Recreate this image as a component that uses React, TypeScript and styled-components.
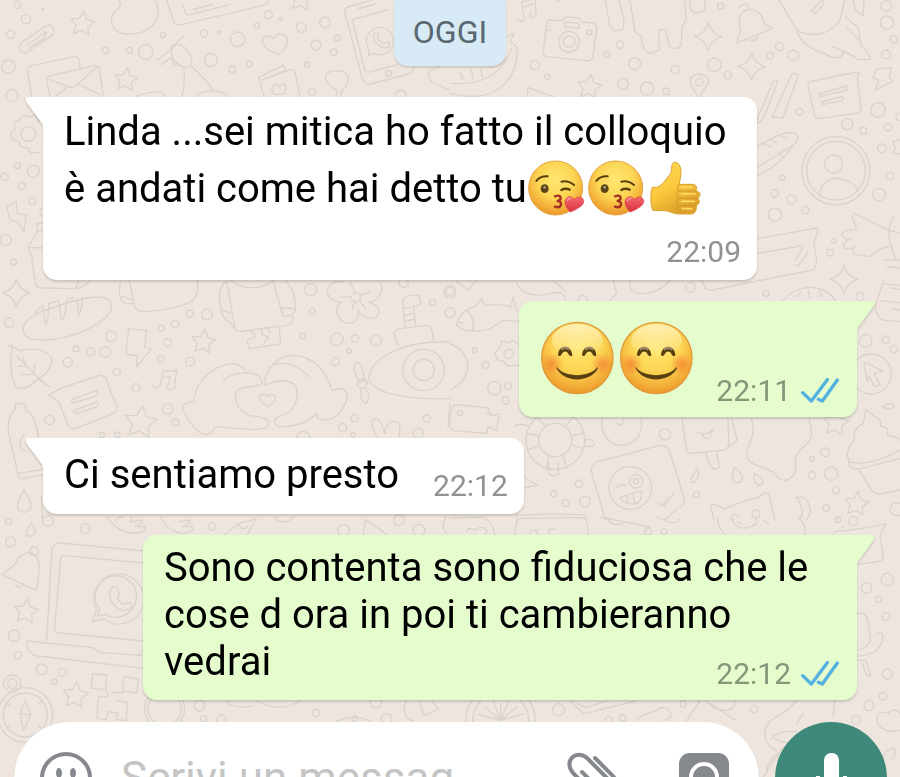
import React, { useId } from "react";
import styled, { createGlobalStyle, css } from "styled-components";

const GlobalStyle = createGlobalStyle`
  *, *::before, *::after { box-sizing: border-box; }
  html, body { margin: 0; height: 100%; overflow: hidden; }
  body { font-family: Roboto, "Liberation Sans", sans-serif; background: #eee6de; }
`;

/* ---------- layout ---------- */

const Screen = styled.main`
  position: relative;
  isolation: isolate;
  display: flex;
  flex-direction: column;
  height: 100vh;
  overflow: hidden;
  background: #eee6de;
`;

const WallpaperSvg = styled.svg`
  position: absolute;
  inset: 0;
  z-index: -1;
  width: 100%;
  height: 100%;
`;

const DayChip = styled.h2`
  align-self: center;
  flex: none;
  margin: 0;
  padding: 11px 19px 13px;
  border-radius: 0 0 14px 14px;
  background: #d8eaf5;
  box-shadow: 0 2px 2px rgba(0, 0, 0, 0.12);
  color: #596870;
  font-size: 32px;
  font-weight: 400;
  line-height: 42px;
`;

const Thread = styled.ol`
  display: flex;
  flex-direction: column;
  flex: none;
  gap: 21px;
  margin: 0;
  padding: 31px 43px 22px;
  list-style: none;
`;

type Side = "in" | "out";
type Flow = "stack" | "row" | "overlay";

const Bubble = styled.li<{ $side: Side; $flow: Flow }>`
  position: relative;
  max-width: calc(100% - 100px);
  filter: drop-shadow(0 2px 1px rgba(60, 50, 40, 0.2));
  ${({ $side }) =>
    $side === "in"
      ? css`
          align-self: flex-start;
          padding: 9px 16px 11px 21px;
          background: #ffffff;
          border-radius: 0 14px 14px 14px;
          color: #8f9194;
        `
      : css`
          align-self: flex-end;
          padding: 9px 18px 9px 21px;
          background: #e5fdcd;
          border-radius: 14px 0 14px 14px;
          color: #83977a;
        `}
  ${({ $flow }) =>
    $flow === "stack"
      ? css`
          display: flex;
          flex-direction: column;
          gap: 18px;
        `
      : $flow === "row"
        ? css`
            display: flex;
            align-items: flex-end;
            gap: 34px;
          `
        : css`
            display: grid;
            & > * {
              grid-area: 1 / 1;
            }
          `}

  &::before {
    content: "";
    position: absolute;
    top: 0;
    width: 19px;
    height: 30px;
    background: inherit;
    ${({ $side }) =>
      $side === "in"
        ? css`
            left: -18px;
            clip-path: path("M3 0H19V30H18Q18 27 16 25L2 6Q-1 0 3 0Z");
          `
        : css`
            right: -18px;
            clip-path: path("M16 0H0V30H1Q1 27 3 25L17 6Q20 0 16 0Z");
          `}
  }
`;

const textSpacing = {
  stack: css`
    margin: -3px 0 0;
    line-height: 57px;
  `,
  row: css`
    margin: 4px 0 5px;
    line-height: 47px;
  `,
  overlay: css`
    margin: 0 0 6px;
    line-height: 47px;
  `,
};

const MessageText = styled.p<{ $flow: Flow }>`
  color: #000;
  font-size: 40px;
  ${({ $flow }) => textSpacing[$flow]}
`;

const EmojiRow = styled.div`
  display: flex;
  margin: 10px -14px 12px -2px;
`;

const Meta = styled.div`
  display: flex;
  align-items: center;
  align-self: flex-end;
  justify-self: end;
  margin-left: auto;
  gap: 10px;
  font-size: 30px;
  line-height: 34px;
`;

const TickSvg = styled.svg`
  width: 38px;
  height: 26px;
  color: #53b1e1;
`;

const InlineEmoji = styled.svg`
  width: 60px;
  height: 60px;
  margin: -6px 0;
  vertical-align: -10px;
`;

const BigEmoji = styled.svg`
  width: 79px;
  height: 76px;
`;

const Composer = styled.form`
  display: flex;
  flex: none;
  gap: 16px;
  padding: 0 13px 8px 14px;
`;

const Field = styled.div`
  display: flex;
  flex: 1;
  align-items: center;
  min-width: 0;
  height: 112px;
  padding: 0 30px 0 25px;
  border-radius: 56px;
  background: #fff;
  box-shadow: 0 1px 2px rgba(0, 0, 0, 0.12);
`;

const TextInput = styled.input`
  flex: 1;
  min-width: 0;
  height: 60px;
  margin-left: 28px;
  padding: 0;
  border: 0;
  outline: 0;
  background: transparent;
  color: #000;
  font: 400 44px/60px Roboto, "Liberation Sans", sans-serif;
  &::placeholder {
    color: #c4c4c4;
    opacity: 1;
  }
`;

const IconButton = styled.button`
  display: grid;
  flex: none;
  place-items: center;
  padding: 0;
  border: 0;
  background: none;
  color: #85888d;
  cursor: pointer;
  & + & {
    margin-left: 60px;
  }
`;

const MicButton = styled.button`
  display: grid;
  flex: none;
  place-items: center;
  width: 112px;
  height: 112px;
  padding: 0;
  border: 0;
  border-radius: 50%;
  background: #3f897b;
  color: #fff;
  cursor: pointer;
`;

/* ---------- emoji ---------- */

function FaceGradient({ id, cx, cy, r }: { id: string; cx: number; cy: number; r: number }) {
  return (
    <radialGradient id={id} gradientUnits="userSpaceOnUse" cx={cx} cy={cy - r * 0.3} r={r * 1.35}>
      <stop offset="0" stopColor="#ffe873" />
      <stop offset="0.5" stopColor="#fcd553" />
      <stop offset="0.82" stopColor="#f2ab35" />
      <stop offset="1" stopColor="#e8912c" />
    </radialGradient>
  );
}

function Kiss() {
  const id = useId();
  return (
    <InlineEmoji viewBox="0 0 180 180" role="img" aria-label="faccina che manda un bacio">
      <defs>
        <FaceGradient id={id + "f"} cx={86} cy={90} r={81} />
        <linearGradient id={id + "h"} x1="0" y1="0" x2="0" y2="1">
          <stop offset="0" stopColor="#f4696f" />
          <stop offset="1" stopColor="#d8303f" />
        </linearGradient>
      </defs>
      <circle cx="86" cy="90" r="81" fill={`url(#${id}f)`} stroke="#e3a341" strokeWidth="3" />
      <g fill="none" stroke="#5a3f0e" strokeWidth="6" strokeLinecap="round">
        <path d="M28 69Q39 54 62 55" />
        <path d="M103 71Q124 67 141 81" />
        <path d="M103 96Q115 89 128 95" strokeWidth="7" />
      </g>
      <ellipse cx="53" cy="92" rx="12" ry="13" fill="#5b4418" />
      <circle cx="53" cy="88" r="4" fill="#a99a78" />
      <path
        d="M84 115Q98 110 101 118Q102 127 92 129Q104 131 102 141Q98 151 84 146"
        fill="none"
        stroke="#a33123"
        strokeWidth="7"
        strokeLinecap="round"
        strokeLinejoin="round"
      />
      <path
        d="M130 162C119 151 110 137 116 124C122 113 137 114 142 126C149 113 167 115 170 127C173 142 150 154 130 162Z"
        fill={`url(#${id}h)`}
        stroke="#d73c48"
        strokeWidth="2"
      />
      <path d="M121 128Q125 120 132 121" fill="none" stroke="#fca0a0" strokeWidth="4" strokeLinecap="round" />
    </InlineEmoji>
  );
}

function ThumbsUp() {
  const id = useId();
  return (
    <InlineEmoji viewBox="0 0 180 180" role="img" aria-label="pollice in su">
      <defs>
        <linearGradient id={id} x1="0" y1="0" x2="0.5" y2="1">
          <stop offset="0" stopColor="#fbd75a" />
          <stop offset="0.55" stopColor="#fcc93c" />
          <stop offset="1" stopColor="#dda02a" />
        </linearGradient>
      </defs>
      <path
        d="M16 88C36 90 44 80 54 68C69 50 74 44 74 30C74 18 78 12 86 13C98 15 102 30 102 43C102 58 97 70 97 79L137 79C150 79 152 94 145 99C162 99 163 116 151 121C160 124 158 140 147 143C151 151 145 168 132 168L103 168C75 169 65 156 44 158L17 157C10 138 10 104 16 88Z"
        fill={`url(#${id})`}
        stroke="#d9a02e"
        strokeWidth="3"
        strokeLinejoin="round"
      />
      <path d="M97 79Q88 84 94 98Q84 106 94 119Q84 130 94 142Q88 155 100 166" fill="none" stroke="#d29a2b" strokeWidth="3" />
      <path d="M95 99H145M94 121H151M95 143H146" fill="none" stroke="#cf9629" strokeWidth="3" strokeLinecap="round" />
      <path d="M104 87H136M104 108H144M104 130H142M106 152H134" fill="none" stroke="#ffdc68" strokeWidth="5" strokeLinecap="round" />
    </InlineEmoji>
  );
}

function Smile() {
  const id = useId();
  return (
    <BigEmoji viewBox="0 0 237 228" role="img" aria-label="faccina sorridente">
      <defs>
        <FaceGradient id={id + "f"} cx={118} cy={114} r={109} />
        <radialGradient id={id + "c"}>
          <stop offset="0" stopColor="#f27a2e" stopOpacity="0.7" />
          <stop offset="1" stopColor="#f27a2e" stopOpacity="0" />
        </radialGradient>
        <linearGradient id={id + "s"} x1="0" y1="0" x2="0" y2="1">
          <stop offset="0" stopColor="#fff6c9" stopOpacity="0.8" />
          <stop offset="1" stopColor="#fff6c9" stopOpacity="0" />
        </linearGradient>
      </defs>
      <circle cx="118" cy="114" r="107" fill={`url(#${id}f)`} stroke="#e09a3a" strokeWidth="4" />
      <ellipse cx="118" cy="62" rx="76" ry="50" fill={`url(#${id}s)`} />
      <circle cx="42" cy="133" r="34" fill={`url(#${id}c)`} />
      <circle cx="194" cy="133" r="34" fill={`url(#${id}c)`} />
      <g fill="#57400f">
        <path d="M60 105C62 72 100 72 103 106C99 111 94 108 91 101C86 92 77 92 72 101C68 109 62 110 60 105Z" />
        <path d="M132 105C135 72 173 72 175 106C171 111 166 108 163 101C158 92 149 92 144 101C140 109 134 110 132 105Z" />
        <path d="M57 141C76 173 157 174 178 141C181 142 180 146 177 150C152 188 82 187 59 150C56 146 55 143 57 141Z" />
      </g>
      <path d="M72 87Q81 80 92 87M144 87Q153 80 164 87" fill="none" stroke="#a08a68" strokeWidth="7" strokeLinecap="round" />
    </BigEmoji>
  );
}

function Ticks() {
  return (
    <TickSvg viewBox="0 0 114 78" role="img" aria-label="letto">
      <path
        d="M5 44L31 69L79 5M52 64L64 69L109 6"
        fill="none"
        stroke="currentColor"
        strokeWidth="10"
        strokeLinecap="round"
        strokeLinejoin="round"
      />
    </TickSvg>
  );
}

/* ---------- wallpaper ---------- */

type Dot = [number, number, number];

interface Patch {
  x: number;
  y: number;
  dots: Dot[];
  stars: Dot[];
  sparks?: Dot[];
  lines: string[];
}

function star(cx: number, cy: number, r: number) {
  const pts: string[] = [];
  for (let i = 0; i < 10; i++) {
    const a = (Math.PI / 5) * i - Math.PI / 2 + 0.12;
    const k = i % 2 ? r * 0.5 : r;
    pts.push(`${(cx + Math.cos(a) * k).toFixed(0)} ${(cy + Math.sin(a) * k).toFixed(0)}`);
  }
  return `M${pts.join("L")}Z`;
}

function spark(cx: number, cy: number, r: number) {
  const k = r * 0.2;
  return `M${cx} ${cy - r}Q${cx + k} ${cy - k} ${cx + r} ${cy}Q${cx + k} ${cy + k} ${cx} ${cy + r}Q${cx - k} ${cy + k} ${cx - r} ${cy}Q${cx - k} ${cy - k} ${cx} ${cy - r}Z`;
}

const patches: Patch[] = [
  {
    x: 0,
    y: 0,
    dots: [
      [52, 15, 11], [78, 58, 14], [32, 103, 12], [25, 200, 20], [36, 287, 18], [489, 105, 8], [612, 100, 11],
      [657, 97, 4], [713, 118, 22], [805, 45, 12], [842, 57, 4], [770, 78, 8], [904, 82, 15], [975, 67, 16],
      [1011, 114, 9], [948, 135, 15], [1001, 157, 10], [437, 156, 22], [316, 151, 10], [388, 151, 9],
      [633, 180, 19], [697, 208, 10], [748, 192, 9], [921, 194, 8], [936, 276, 10], [1203, 285, 15], [128, 28, 3],
      [52, 497, 9], [14, 530, 11], [65, 558, 11], [100, 514, 18], [97, 604, 10], [17, 720, 17], [1166, 220, 9],
      [85, 402, 22],
    ],
    stars: [[247, 72, 38], [378, 240, 36], [903, -2, 38]],
    lines: [
      "M64 128L140 77C160 70 170 95 155 107L82 156C62 168 50 142 64 128ZM80 135L138 96M86 146L130 116Q146 100 132 94",
      "M358 0C365 12 360 22 350 30C325 52 328 96 376 102C430 106 476 80 474 30Q472 10 464 0",
      "M500 0L520 62Q526 78 545 74L800 14L805 0M548 12L556 38Q560 46 570 44L690 14M580 28L640 12",
      "M788 126C788 105 812 104 820 116C828 96 860 98 862 120C864 142 850 154 838 163C816 158 794 148 788 126Z",
      "M95 290L83 215Q83 200 96 197L220 170Q236 168 238 182L240 202M150 290L140 240Q142 230 155 227L280 197Q294 196 298 208L310 290M145 238L213 262Q222 264 228 256L292 200M166 290L205 258M234 252L300 284",
      "M472 180L512 150Q512 134 524 134L552 108M484 194L514 172Q516 192 530 198M524 136C550 126 574 160 576 186C572 210 540 204 522 180C510 160 514 146 524 136ZM552 205Q556 250 546 290M574 198Q612 230 640 272Q670 275 684 290M590 290Q600 274 640 272M410 290Q440 274 486 276L494 290",
      "M792 290L776 232L850 196L858 210L786 240M786 240L870 210Q884 208 886 220L900 290M815 266Q826 238 836 262Q854 240 858 264Q858 286 838 282Q818 290 815 266",
      "M1012 272C990 262 972 240 978 226C990 206 1036 208 1044 230C1050 254 1030 268 1024 276L1022 288M1012 272L1008 288",
      "M1118 0L1046 20Q1030 26 1036 44L1086 232Q1092 256 1112 252L1225 222Q1246 214 1242 200M1072 56L1166 28M1058 62L1094 210Q1098 218 1108 216L1192 194M1058 62Q1060 56 1072 54M1076 26L1126 12",
      "M1108 155L1106 166L1122 160A41 41 0 1 0 1100 132ZM1122 102Q1128 92 1136 106L1132 114Q1142 130 1154 130L1164 124Q1174 134 1166 140C1148 152 1112 124 1122 102Z",
      "M1350 270L1296 246Q1276 224 1294 210L1320 196",
      "M120 456L92 460L84 444L62 440L58 424L38 420L32 398L46 388L42 368L58 360L70 346L90 352L104 344L118 366",
      "M20 620L48 604L52 640L78 646L72 694L54 666L30 660Z",
      "M130 620Q110 640 128 650M130 668L112 672L112 694L84 744L100 780M112 694L130 690M86 742L130 744",
    ],
  },
  {
    x: 450,
    y: 0,
    dots: [
      [357, 125, 31], [357, 125, 17], [418, 97, 8], [510, 134, 11], [470, 163, 9], [554, 191, 18], [255, 195, 14],
      [292, 231, 8], [675, 209, 12], [519, 252, 16], [591, 266, 20], [648, 274, 10], [793, 194, 20], [833, 225, 11],
      [812, 18, 9], [961, 167, 10], [989, 140, 12], [1030, 166, 16], [1309, 18, 16], [1311, 68, 20], [1331, 118, 11],
      [1308, 163, 13], [1284, 330, 22], [1049, 335, 10], [1192, 373, 17], [1240, 392, 10], [1314, 382, 11],
      [1296, 445, 13], [1320, 528, 11], [997, 533, 8], [974, 580, 11], [1025, 598, 14], [975, 644, 20],
      [1066, 631, 11], [1287, 584, 19], [1158, 512, 102], [1158, 512, 88], [1151, 492, 27], [1152, 722, 7],
      [1141, 758, 10], [748, 247, 11], [324, 0, 5], [1350, 350, 12],
    ],
    stars: [[418, 262, 38]],
    sparks: [[775, 110, 42], [905, 200, 42]],
    lines: [
      "M202 58A10 8 0 1 0 222 54L214 6L256 -4L258 42A10 8 0 1 1 244 38M216 22L250 12",
      "M296 60L335 62L350 50L388 54L396 66L430 70Q442 74 440 88L428 172Q424 184 410 182L290 170Q278 168 280 152L290 70ZM344 66L386 70L388 84L344 80ZM290 88Q296 98 302 88",
      "M466 0L480 80Q494 102 520 86L522 60L508 0M540 0L556 98L574 106Q576 160 604 160L628 150L626 92Q636 86 648 92L658 142Q690 152 694 130L696 80L708 62L704 0M720 0L722 30Q734 46 766 32L764 0",
      "M862 130Q860 112 872 96Q858 44 888 30C916 22 936 40 944 72L968 84L864 128M870 22Q876 8 892 14L896 26M900 120Q924 124 924 104",
      "M986 0C1006 20 1024 80 1050 96C1090 110 1140 106 1170 60L1184 0M1084 34L1112 4Q1124 0 1120 14L1096 40ZM1040 92C1050 120 1080 150 1122 160C1150 176 1170 180 1180 160Q1170 144 1146 140M1170 150Q1200 160 1222 178L1262 178Q1252 150 1232 138L1226 84L1186 50M1210 0L1216 30L1240 48L1242 0M1190 80L1226 120",
      "M746 292C734 270 718 256 720 240C728 216 768 218 776 240C778 258 752 272 750 292",
      "M924 370Q920 350 934 330L972 240Q984 238 982 248L940 356ZM966 352L1026 222Q1040 216 1044 230L998 354L970 350Z",
      "M1074 256Q1074 246 1084 244L1190 222L1228 216L1222 240L1234 326Q1232 338 1220 340L1106 356Q1096 356 1094 346ZM1106 282L1188 258Q1196 260 1192 270L1110 290ZM1114 306L1176 290Q1184 294 1178 302L1118 314Z",
      "M1280 208L1324 202L1318 230L1328 244L1276 270L1286 240L1268 234Z",
      "M924 440C960 416 1000 394 1034 398C1050 408 1044 424 1030 436C1000 480 960 510 924 526M924 500L1030 436M934 430L962 440M958 418L982 428M984 406L1008 414M984 456L1002 474",
      "M1108 590C1110 550 1140 530 1170 536Q1216 546 1222 570",
      "M170 110L192 100L180 124L200 140C206 200 180 250 130 276Q80 300 0 280M186 142C178 180 150 196 120 202M30 218L40 236M64 210L70 238M92 208L98 232M0 250Q120 260 168 180M232 290L234 262L310 290",
      "M924 716L1090 686Q1106 680 1104 692L1092 730L1100 780M924 760L1052 738M1036 780L1060 742M1060 780L1074 752",
      "M1350 700L1310 688L1212 640Q1204 646 1212 666L1220 690Q1176 688 1176 706Q1184 722 1206 714Q1176 726 1182 744Q1200 752 1214 740Q1200 762 1220 764L1260 770Q1290 740 1326 738M1330 650Q1300 700 1340 780",
      "M1350 420L1328 424L1336 442L1328 460L1350 462",
    ],
  },
  {
    x: 0,
    y: 260,
    dots: [
      [40, 6, 9], [28, 188, 14], [334, 229, 16], [228, 267, 9], [272, 275, 12], [316, 276, 16], [203, 307, 14],
      [350, 336, 11], [569, 161, 11], [621, 164, 16], [525, 192, 11], [484, 205, 9], [503, 248, 12], [483, 296, 10],
      [570, 305, 13], [408, 383, 12], [149, 480, 14], [503, 447, 16], [526, 487, 10], [932, 89, 18], [937, 154, 9],
      [908, 228, 8], [1011, 238, 19], [1066, 236, 11], [1128, 242, 16], [1047, 272, 7], [1006, 305, 12],
      [1298, 127, 9], [1350, 95, 18], [1350, 158, 15], [1068, 112, 14], [1064, 475, 11], [1028, 503, 12],
      [1281, 476, 11], [1255, 520, 15], [1059, 524, 6], [306, 525, 8], [352, 524, 8], [1271, 330, 62],
      [1271, 330, 32], [1211, 68, 14], [1086, 371, 14], [910, 534, 20],
    ],
    stars: [[610, 246, 38], [422, 488, 50]],
    sparks: [[49, 99, 42]],
    lines: [
      "M95 0L108 76Q112 84 124 84L228 86Q250 84 268 62M228 84L236 62",
      "M70 214C66 180 100 164 150 146C210 124 270 106 310 112C342 120 340 150 320 170C280 206 210 236 140 240C100 240 74 236 70 214ZM104 160L128 136L136 192Q146 186 146 130L176 122L184 182Q196 176 200 120L220 112M234 170Q244 160 248 112M232 124L236 166",
      "M26 256L60 272C110 260 154 274 156 304C150 330 130 352 112 356L148 380M38 256C30 300 30 350 50 384C80 390 100 372 112 356M50 288L138 376M70 292L76 320L56 318M104 312L100 344L66 344",
      "M146 406L180 386L298 346Q312 344 318 356L350 440Q352 456 336 462L226 506Q210 508 204 494L176 424ZM214 420L288 392Q298 396 290 408L218 430ZM222 452L290 426Q300 430 292 440L228 462Z",
      "M386 206L440 212L434 262L454 268L410 320L412 288L378 282Z",
      "M458 376A12 9 0 1 0 482 370L488 334L530 332L524 376A12 9 0 1 1 506 374L510 350L486 352",
      "M362 62Q350 120 376 130L402 132M388 62L404 140Q416 160 450 154Q520 148 572 126Q598 110 592 62M360 110Q380 108 396 120",
      "M680 62Q652 84 660 130Q664 178 690 186L706 210Q716 218 740 212L860 196Q882 190 880 170M680 62L706 210M694 62C730 90 780 90 820 62M820 62L838 130L850 170Q880 170 886 150Q888 90 856 62M842 148Q860 140 884 148M664 150L692 160M744 210Q770 220 764 232L742 240L746 266L842 252L838 204M784 206L786 224L806 232L790 252M790 204Q810 200 810 220",
      "M1030 66C990 60 970 90 990 112Q1000 124 1024 126C996 150 1016 186 1046 190C1070 190 1078 170 1074 150C1090 180 1130 182 1136 160C1140 140 1120 130 1108 126C1140 120 1154 90 1140 66M1050 66L1066 100M1066 120L1056 150M1050 110L1022 112M1080 106L1110 96M1078 120L1096 146",
      "M548 446Q548 424 582 426C582 380 620 320 700 310C720 314 738 330 738 338C772 338 788 354 786 372C770 384 720 374 708 396C700 430 720 452 744 466C780 470 808 474 808 492C800 514 760 510 644 500Q636 526 616 524C590 518 560 480 548 446ZM670 364Q696 336 738 340",
      "M796 376C790 340 820 290 880 286C950 290 980 340 996 392Q1034 376 1042 404C1040 440 1010 480 976 480Q948 480 950 460C920 490 880 500 846 500C814 500 820 472 846 466C880 456 900 420 888 380C872 354 830 360 796 376ZM806 322Q860 286 930 352",
      "M804 440Q776 424 778 410C784 398 798 402 802 410C812 398 828 404 826 416Q824 430 804 440Z",
      "M1350 246C1240 240 1120 280 1106 350C1110 400 1220 420 1350 416M1194 256L1182 220Q1186 208 1200 206L1280 196Q1294 198 1296 212L1300 242M1216 202L1208 124Q1212 106 1240 106L1258 108L1262 134L1242 140L1246 196M1212 146L1240 140M1214 166L1242 160M1214 184L1244 178M1078 364Q1054 328 1066 308C1084 300 1094 340 1090 362M1084 386Q1078 424 1096 430C1112 420 1110 400 1094 382M1072 366L1098 360L1104 372",
      "M1130 532Q1108 490 1120 478C1140 468 1150 500 1154 520Q1160 480 1186 484C1206 486 1200 520 1196 532",
      "M46 450L46 432L74 430L78 450M46 450C26 460 22 500 26 520L56 650Q60 658 70 656L130 644M78 452C102 460 110 500 116 532M56 640L130 628M72 524C52 550 60 570 76 570",
      "M72 690C60 714 46 736 56 750C74 766 94 750 94 734C92 716 78 706 72 690ZM124 710L128 780",
      "M1350 430L1344 500",
    ],
  },
  {
    x: 450,
    y: 260,
    dots: [
      [0, 94, 12], [74, 271, 7], [106, 315, 10], [133, 385, 20], [174, 377, 10], [167, 421, 11], [176, 281, 14],
      [30, 459, 8], [645, 523, 17], [387, 671, 11], [311, 702, 9], [347, 729, 10], [405, 725, 16], [739, 704, 9],
      [1086, 596, 7], [1126, 577, 13], [1086, 646, 11], [1144, 641, 20], [1158, 691, 11], [1129, 744, 10],
      [1340, 748, 20], [1247, 243, 19], [1308, 239, 11], [1332, 267, 11], [1264, 342, 60], [948, 100, 9],
      [1230, 110, 12], [721, 82, 14], [541, 684, 64], [316, 540, 50], [316, 540, 88], [558, 664, 20], [558, 664, 8],
      [918, 762, 12], [398, 120, 14],
    ],
    stars: [[1158, 490, 40], [1220, 732, 38]],
    sparks: [[1182, 58, 42]],
    lines: [
      "M20 196Q30 150 76 140L94 116L104 136Q160 130 182 142L190 110L198 150L210 156M20 196Q40 216 72 212Q110 220 160 180L206 184M48 150Q78 174 68 210M20 188L40 188",
      "M0 252Q50 270 54 320Q46 370 0 390",
      "M150 262L156 242L178 248L188 240L204 250M150 262L134 278L142 300L160 304L172 318L206 316",
      "M2 460L0 500Q2 510 14 512L110 520L114 500L140 512L148 462L122 466L116 444L20 434Q8 434 6 446ZM110 456L122 466",
      "M196 500Q200 484 240 500M406 540Q432 536 434 550Q430 564 404 558M298 610L296 640Q310 656 326 640L324 608M260 470L284 496M232 520L270 528M236 570L272 556M370 470L348 498M400 520L362 528M398 566L362 554M296 590L290 628M340 588L350 624M220 650L262 676L222 684",
      "M426 640Q420 616 440 606L630 556Q652 554 660 576L704 720Q702 740 682 746L644 780M426 640L466 780M510 712L574 692Q578 734 548 732Q520 732 510 712ZM530 708L534 728M550 702L554 728M498 684Q512 668 528 678M626 730L638 738L654 708M642 740L670 700",
      "M456 476C450 520 480 560 520 556C560 550 580 520 574 476M500 490L516 496L520 476",
      "M696 476L710 570Q714 582 728 580L820 570Q836 568 836 550L834 476M740 516Q770 530 790 508M756 520Q760 540 780 534L786 512M844 476L862 540L836 562M768 580L780 616Q794 636 808 620L800 574",
      "M904 476C924 530 880 570 892 596C910 626 970 620 984 654C1010 672 1044 650 1036 610C1030 560 1090 560 1084 516L1078 476",
      "M742 626C726 650 716 664 728 668C746 664 748 640 742 626ZM854 622C840 656 850 668 866 668C888 656 876 640 854 622ZM914 640C908 666 918 676 932 676C948 662 934 650 914 640ZM1296 440Q1316 424 1334 438Q1324 454 1296 440",
      "M1212 540Q1210 500 1240 492L1248 448L1274 470Q1296 476 1290 498Q1320 500 1312 526Q1340 530 1350 540M1212 540Q1180 580 1200 606Q1260 620 1350 570M1196 604Q1198 630 1224 626L1264 690Q1280 706 1300 700L1350 690M1224 628L1350 596",
      "M1252 364L1242 312Q1246 306 1254 310L1298 334L1272 340L1290 374L1274 380L1258 350Z",
      "M1300 62L1276 140Q1280 180 1310 182L1350 184M1306 0L1350 0M1310 20L1350 24M1298 70L1350 76M1324 84L1350 88M1290 122L1350 128M1324 146L1350 150",
      "M200 68C210 104 260 112 300 100Q346 90 346 122M310 62Q330 80 346 92M490 62L500 100L480 122M540 62C530 120 620 110 660 62M756 62L766 84Q772 92 786 90L1088 30Q1100 24 1100 0M1036 14L1044 20L1056 0M1000 122C1030 80 1110 60 1158 122M1040 110L1052 96M1074 90L1078 112M1108 94L1116 110",
      "M792 780L782 740Q786 730 800 734L824 748Q860 728 926 712L944 698Q962 700 960 716L974 780M840 780Q852 750 866 770M1038 714C1080 700 1090 760 1070 780M1042 716Q1070 760 1046 780M20 64L54 90L78 62M200 780L200 766Q300 760 404 764L410 780",
    ],
  },
  {
    x: 0,
    y: 517,
    dots: [
      [26, 14, 9], [144, 12, 16], [32, 75, 15], [255, 35, 15], [635, 28, 11], [1031, 40, 18], [1197, 10, 16],
      [1257, 40, 18], [42, 356, 17], [54, 415, 11], [125, 457, 16], [187, 466, 12], [163, 494, 8], [598, 566, 16],
      [611, 605, 9], [664, 608, 14], [948, 588, 11], [1064, 605, 8], [1160, 606, 16], [1128, 556, 17], [76, 594, 82],
      [76, 594, 66], [37, 500, 26], [37, 500, 14], [494, 576, 60], [494, 576, 50], [102, 103, 13],
    ],
    stars: [[78, 284, 38], [226, 536, 40]],
    lines: [
      "M94 18C84 34 74 48 82 56C100 62 108 46 104 40Q102 30 94 18Z",
      "M8 172L46 140Q56 110 90 106Q124 120 116 166L110 220L8 174M46 202Q54 218 70 204",
      "M140 370L156 96Q160 76 184 78L430 102M164 330L182 124Q184 114 196 116L430 138M164 330Q162 344 176 348L430 372M80 372L280 392L298 406L430 416M80 372Q78 396 98 412Q110 418 140 420L430 454M412 416L430 400",
      "M276 314L290 280A75 75 0 1 1 312 306ZM298 276A62 62 0 1 1 316 292L294 298Z",
      "M330 222Q336 202 352 214L358 232L352 244Q360 258 374 262L388 256Q400 264 392 274C360 296 320 250 330 222Z",
      "M278 470L320 474L318 518L274 514ZM372 478L416 486L410 528L368 522ZM336 526L370 528M318 524Q330 536 322 540L296 538L290 604L318 608L324 584L352 588L350 608L378 610L384 556L346 550",
      "M76 548L92 594L70 640L60 590ZM60 590L92 594M18 560L30 566M18 634L28 626M124 554L116 562M122 632L114 626",
      "M320 0Q360 50 400 48Q440 50 436 30L404 28Q430 22 426 10L390 14Q400 0 392 0M346 14Q350 0 370 0M482 0Q500 40 540 48Q584 50 578 30L548 28Q574 20 570 10L538 14M674 52L716 20L768 6L742 52M716 20Q726 46 742 28M822 0Q850 30 880 0M1090 52L1096 8L1160 52",
      "M1218 552Q1200 600 1240 612M1258 552L1272 596L1316 576L1296 552M680 552Q700 580 760 566M770 552Q840 590 900 552M1010 612Q1060 590 1110 612M1340 50Q1320 30 1338 0",
    ],
  },
  {
    x: 450,
    y: 517,
    dots: [
      [1250, 213, 16], [1312, 188, 19], [1286, 247, 9], [1308, 299, 12], [1312, 471, 15], [1299, 538, 11],
      [1257, 566, 15], [1218, 609, 13], [1164, 8, 8], [1210, 12, 14], [912, 576, 11], [699, 561, 9], [326, 578, 18],
      [518, 603, 10], [476, 608, 10], [152, 610, 104], [152, 610, 84], [594, 42, 11], [642, 44, 9],
    ],
    stars: [],
    lines: [
      "M152 610L152 560M152 610L104 570M152 610L200 570M152 610L84 592M152 610L222 590M152 610L130 552M152 610L176 552",
      "M1150 52L1152 44Q1220 40 1308 20L1290 56L1300 120Q1296 134 1280 134L1224 142M1166 36L1180 30",
      "M1222 290Q1246 282 1254 310L1262 370Q1250 394 1222 400M1282 350L1290 348Q1300 346 1298 362Q1296 410 1222 418M1222 430L1248 430L1262 478L1248 472L1238 440",
      "M1350 640C1310 650 1276 630 1280 602C1290 580 1310 584 1316 590C1326 572 1344 580 1350 590",
      "M960 612C930 650 950 690 980 700M960 612L1010 580L1040 552M970 660Q1000 690 1080 670M964 664Q980 640 1040 644M1154 552L1150 600M940 780L1000 690M950 760Q960 720 990 706M1040 620L1060 590",
      "M1310 700L1332 694Q1342 710 1324 730M1300 724L1310 700",
      "M360 552L400 588Q420 592 440 580L560 552M560 608C580 590 600 586 620 580L630 572Q666 570 662 600L640 612M380 560L410 572L470 552M750 552L710 612M770 552C800 588 860 590 854 552M780 560L860 612M450 0L600 30L580 52M470 0Q480 30 520 20M620 0Q680 30 686 8M804 0Q800 30 824 52M846 0L852 20Q880 46 920 20L920 0M864 14L874 22M940 10L956 20M1042 0Q1070 20 1064 52M195 52L200 14Q206 4 220 4L400 2Q416 6 414 52M240 52Q236 38 260 40L262 52M300 52L296 38L318 36M0 4L100 0Q130 20 134 52M50 46Q56 26 76 40Q96 20 112 42L106 52",
    ],
  },
];

function Wallpaper() {
  return (
    <WallpaperSvg viewBox="0 0 900 777" preserveAspectRatio="xMidYMid slice" aria-hidden="true">
      <g fill="none" stroke="#dad3cd" strokeWidth="4" strokeLinecap="round" strokeLinejoin="round">
        {patches.map((p, i) => (
          <g key={i} transform={`translate(${p.x} ${p.y}) scale(0.3333)`}>
            {p.dots.map(([x, y, r], k) => (
              <circle key={k} cx={x} cy={y} r={r} />
            ))}
            {p.stars.map(([x, y, r], k) => (
              <path key={k} d={star(x, y, r)} />
            ))}
            {p.sparks?.map(([x, y, r], k) => (
              <path key={k} d={spark(x, y, r)} />
            ))}
            {p.lines.map((d, k) => (
              <path key={k} d={d} />
            ))}
          </g>
        ))}
      </g>
    </WallpaperSvg>
  );
}

/* ---------- page ---------- */

export default function App() {
  return (
    <Screen>
      <GlobalStyle />
      <Wallpaper />
      <DayChip>OGGI</DayChip>
      <Thread>
        <Bubble $side="in" $flow="stack">
          <MessageText $flow="stack">
            Linda ...sei mitica ho fatto il colloquio è andati come hai detto tu
            <Kiss />
            <Kiss />
            <ThumbsUp />
          </MessageText>
          <Meta>
            <time>22:09</time>
          </Meta>
        </Bubble>
        <Bubble $side="out" $flow="row">
          <EmojiRow>
            <Smile />
            <Smile />
          </EmojiRow>
          <Meta>
            <time>22:11</time>
            <Ticks />
          </Meta>
        </Bubble>
        <Bubble $side="in" $flow="row">
          <MessageText $flow="row">Ci sentiamo presto</MessageText>
          <Meta>
            <time>22:12</time>
          </Meta>
        </Bubble>
        <Bubble $side="out" $flow="overlay">
          <MessageText $flow="overlay">
            Sono contenta sono fiduciosa che le cose d ora in poi ti cambieranno vedrai
          </MessageText>
          <Meta>
            <time>22:12</time>
            <Ticks />
          </Meta>
        </Bubble>
      </Thread>
      <Composer onSubmit={(e) => e.preventDefault()}>
        <Field>
          <IconButton type="button" aria-label="Emoji">
            <svg width="54" height="54" viewBox="0 0 54 54" fill="none">
              <circle cx="27" cy="27" r="24" stroke="currentColor" strokeWidth="4" />
              <ellipse cx="20" cy="22" rx="3" ry="5" fill="currentColor" />
              <ellipse cx="34" cy="22" rx="3" ry="5" fill="currentColor" />
              <path d="M15 33Q27 47 39 33Z" fill="currentColor" />
            </svg>
          </IconButton>
          <TextInput aria-label="Messaggio" placeholder="Scrivi un messag…" />
          <IconButton type="button" aria-label="Allega">
            <svg width="52" height="52" viewBox="0 0 52 52" fill="none" stroke="currentColor" strokeWidth="4" strokeLinecap="round">
              <path d="M28 6L46 24C58 38 40 54 27 42L6 21C-4 9 9 -3 20 6L41 27C47 35 37 42 31 36L15 20" />
            </svg>
          </IconButton>
          <IconButton type="button" aria-label="Fotocamera">
            <svg width="50" height="50" viewBox="0 0 50 50">
              <rect width="50" height="50" rx="11" fill="currentColor" />
              <circle cx="25" cy="24" r="13" fill="none" stroke="#fff" strokeWidth="4" />
            </svg>
          </IconButton>
        </Field>
        <MicButton type="button" aria-label="Messaggio vocale">
          <svg width="40" height="50" viewBox="0 0 40 50" fill="none">
            <rect x="13" y="0" width="15" height="31" rx="7" fill="currentColor" />
            <path d="M7 23C7 40 34 40 34 23M20 36V48" stroke="currentColor" strokeWidth="4" />
          </svg>
        </MicButton>
      </Composer>
    </Screen>
  );
}
